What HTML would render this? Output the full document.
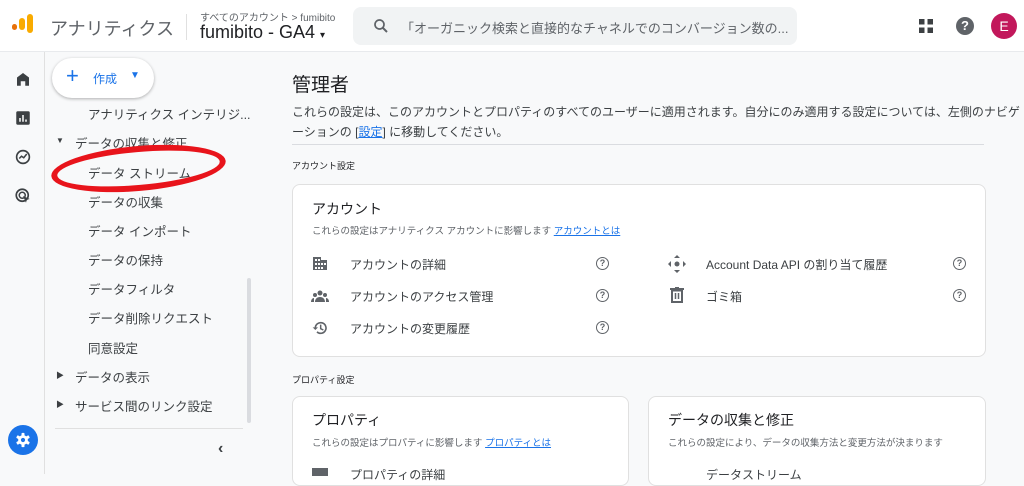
<!DOCTYPE html>
<html><head><meta charset="utf-8"><style>
*{box-sizing:border-box;margin:0;padding:0}
body{width:1024px;height:474px;overflow:hidden;background:#f8f9fa;font-family:"Liberation Sans","Noto Sans CJK JP",sans-serif;color:#202124;position:relative}
.a{position:absolute}
.hdr{left:0;top:0;width:1024px;height:52px;background:#fff;border-bottom:1px solid #e8eaed}
.rail{left:0;top:52px;width:45px;height:422px;border-right:1px solid #e0e0e0;background:#f8f9fa}
.nav{font-size:12.5px;color:#3c4043}
.card{background:#fff;border:1px solid #e0e0e0;border-radius:8px}
.t13{font-size:12px;color:#3c4043}
.q{width:13px;height:13px;border:1.6px solid #5f6368;border-radius:50%;font-size:9px;font-weight:bold;text-align:center;line-height:10px;color:#5f6368}
.lnk{color:#1a73e8;text-decoration:underline}
</style></head><body>
<div class="a hdr">
  <div class="a" style="left:12px;top:24px;width:5px;height:6px;background:#e8710a;border-radius:3px"></div>
  <div class="a" style="left:19px;top:18px;width:6px;height:12px;background:#f9ab00;border-radius:3px"></div>
  <div class="a" style="left:27px;top:14px;width:6px;height:19px;background:#f9ab00;border-radius:3px"></div>
  <div class="a" style="left:50px;top:15px;font-size:18px;color:#5f6368">アナリティクス</div>
  <div class="a" style="left:186px;top:14px;width:1px;height:26px;background:#e0e0e0"></div>
  <div class="a" style="left:200px;top:9px;font-size:10px;color:#5f6368">すべてのアカウント &gt; fumibito</div>
  <div class="a" style="left:200px;top:22px;font-size:18px;color:#202124">fumibito - GA4 <span style="font-size:10px">▾</span></div>
  <div class="a" style="left:353px;top:7px;width:444px;height:38px;background:#f1f3f4;border-radius:8px"></div>
  <svg class="a" style="left:372px;top:17px" width="18" height="18" viewBox="0 0 24 24"><circle cx="10" cy="10" r="6" fill="none" stroke="#5f6368" stroke-width="2.3"/><path d="M14.5 14.5L20 20" stroke="#5f6368" stroke-width="2.6"/></svg>
  <div class="a" style="left:401px;top:18px;font-size:13px;color:#5f6368">「オーガニック検索と直接的なチャネルでのコンバージョン数の...</div>
  <svg class="a" style="left:918px;top:18px" width="16" height="16" viewBox="0 0 16 16" fill="#3c4043"><rect x="1" y="1" width="5.5" height="5.5"/><rect x="9.5" y="1" width="5.5" height="5.5"/><rect x="1" y="9.5" width="5.5" height="5.5"/><rect x="9.5" y="9.5" width="5.5" height="5.5"/></svg>
  <div class="a" style="left:956px;top:17px;width:18px;height:18px;border-radius:50%;background:#5f6368;color:#fff;font-size:13px;font-weight:bold;text-align:center;line-height:18px">?</div>
  <div class="a" style="left:991px;top:13px;width:26px;height:26px;border-radius:50%;background:#c2185b;color:#fff;font-size:14px;text-align:center;line-height:26px">E</div>
</div>
<div class="a rail">
  <svg class="a" style="left:14px;top:18px" width="18" height="18" viewBox="0 0 24 24"><path d="M4 21V10l8-6 8 6v11h-5v-6H9v6z" fill="#3c4043"/></svg>
  <svg class="a" style="left:14px;top:57px" width="18" height="18" viewBox="0 0 24 24"><rect x="3" y="3" width="18" height="18" rx="2" fill="#3c4043"/><path d="M8 17v-5M12 17V8M16 17v-3" stroke="#fff" stroke-width="2"/></svg>
  <svg class="a" style="left:14px;top:96px" width="18" height="18" viewBox="0 0 24 24"><circle cx="12" cy="12" r="8.5" fill="none" stroke="#3c4043" stroke-width="2.2"/><path d="M7 14l3-3 3 2 4-5" fill="none" stroke="#3c4043" stroke-width="2"/></svg>
  <svg class="a" style="left:14px;top:135px" width="18" height="18" viewBox="0 0 24 24"><circle cx="11" cy="11" r="8" fill="none" stroke="#3c4043" stroke-width="2.2"/><circle cx="11" cy="11" r="4" fill="none" stroke="#3c4043" stroke-width="2"/><path d="M12 12l9 4-4 1-1 4z" fill="#3c4043"/></svg>
  <div class="a" style="left:8px;top:373px;width:30px;height:30px;border-radius:50%;background:#1a73e8"></div>
  <svg class="a" style="left:14px;top:379px" width="18" height="18" viewBox="0 0 24 24"><g fill="#fff"><circle cx="12" cy="12" r="6.5"/><rect x="10" y="2.5" width="4" height="19" rx="1"/><rect x="10" y="2.5" width="4" height="19" rx="1" transform="rotate(60 12 12)"/><rect x="10" y="2.5" width="4" height="19" rx="1" transform="rotate(120 12 12)"/></g><circle cx="12" cy="12" r="2.8" fill="#1a73e8"/></svg>
</div>
<div class="a" style="left:52px;top:58px;width:102px;height:40px;background:#fff;border-radius:20px;box-shadow:0 1px 3px rgba(0,0,0,.3)"></div>
<div class="a" style="left:66px;top:64px;font-size:22px;color:#1a73e8;line-height:24px">+</div>
<div class="a" style="left:93px;top:70px;font-size:12px;color:#1a73e8">作成</div>
<div class="a" style="left:130px;top:70px;font-size:10px;color:#1a73e8">▼</div>
<div class="a nav" style="left:88px;top:104px">アナリティクス インテリジ...</div>
<div class="a nav" style="left:56px;top:136px;font-size:8px">▼</div>
<div class="a nav" style="left:75px;top:133px">データの収集と修正</div>
<div class="a nav" style="left:88px;top:163px">データ ストリーム</div>
<div class="a nav" style="left:88px;top:192px">データの収集</div>
<div class="a nav" style="left:88px;top:221px">データ インポート</div>
<div class="a nav" style="left:88px;top:250px">データの保持</div>
<div class="a nav" style="left:88px;top:279px">データフィルタ</div>
<div class="a nav" style="left:88px;top:308px">データ削除リクエスト</div>
<div class="a nav" style="left:88px;top:338px">同意設定</div>
<div class="a nav" style="left:56px;top:370px;font-size:8px">▶</div>
<div class="a nav" style="left:75px;top:367px">データの表示</div>
<div class="a nav" style="left:56px;top:399px;font-size:8px">▶</div>
<div class="a nav" style="left:75px;top:396px">サービス間のリンク設定</div>
<div class="a" style="left:247px;top:278px;width:4px;height:145px;background:#dadce0;border-radius:2px"></div>
<div class="a" style="left:55px;top:428px;width:188px;height:1px;background:#e0e0e0"></div>
<div class="a" style="left:218px;top:440px;font-size:16px;font-weight:bold;color:#3c4043">‹</div>
<div class="a" style="left:51px;top:146px;width:175px;height:45px;border:6px solid #e8141b;border-radius:50%;transform:rotate(-5deg)"></div>

<div class="a" style="left:292px;top:70px;font-size:19px;color:#202124">管理者</div>
<div class="a t13" style="left:292px;top:102px;width:730px;line-height:20px">これらの設定は、このアカウントとプロパティのすべてのユーザーに適用されます。自分にのみ適用する設定については、左側のナビゲーションの [<span class="lnk">設定</span>] に移動してください。</div>
<div class="a" style="left:292px;top:144px;width:692px;height:1px;background:#dadce0"></div>
<div class="a" style="left:292px;top:159px;font-size:9px;color:#202124">アカウント設定</div>
<div class="a card" style="left:292px;top:184px;width:694px;height:173px"></div>
<div class="a" style="left:312px;top:199px;font-size:14px">アカウント</div>
<div class="a" style="left:312px;top:223px;font-size:9.5px;color:#5f6368">これらの設定はアナリティクス アカウントに影響します <span class="lnk">アカウントとは</span></div>
<svg class="a" style="left:312px;top:255px" width="16" height="16" viewBox="0 0 16 16" fill="#5f6368"><path d="M1 2h8v3h6v10H1zM3 4v2h2V4zm3 0v2h2V4zM3 8v2h2V8zm3 0v2h2V8zm3 0v2h2V8zm3 0v2h2V8zM3 12v2h2v-2zm3 0v2h2v-2zm3 0v2h2v-2z"/></svg>
<div class="a t13" style="left:350px;top:256px">アカウントの詳細</div>
<div class="a q" style="left:596px;top:257px">?</div>
<svg class="a" style="left:311px;top:289px" width="18" height="14" viewBox="0 0 18 14" fill="#5f6368"><circle cx="9" cy="4" r="2.5"/><circle cx="4" cy="6" r="2"/><circle cx="14" cy="6" r="2"/><path d="M4 13c0-3 2-5 5-5s5 2 5 5zM0 13c0-2 1-4 3-4v4zM18 13c0-2-1-4-3-4v4z"/></svg>
<div class="a t13" style="left:350px;top:288px">アカウントのアクセス管理</div>
<div class="a q" style="left:596px;top:289px">?</div>
<svg class="a" style="left:312px;top:320px" width="16" height="16" viewBox="0 0 24 24"><path d="M5 12a8 8 0 1 1 2.5 5.8" fill="none" stroke="#5f6368" stroke-width="2.4"/><path d="M1 11h8L5 15z" fill="#5f6368"/><path d="M13 7v6l4 2" fill="none" stroke="#5f6368" stroke-width="2.2"/></svg>
<div class="a t13" style="left:350px;top:320px">アカウントの変更履歴</div>
<div class="a q" style="left:596px;top:321px">?</div>
<svg class="a" style="left:668px;top:255px" width="18" height="18" viewBox="0 0 18 18" fill="#5f6368"><path d="M9 0l3 3H6zM9 18l3-3H6zM0 9l3-3v6zM18 9l-3-3v6z"/><circle cx="9" cy="9" r="2.5"/></svg>
<div class="a t13" style="left:706px;top:256px">Account Data API の割り当て履歴</div>
<div class="a q" style="left:953px;top:257px">?</div>
<svg class="a" style="left:670px;top:287px" width="14" height="16" viewBox="0 0 14 16"><path d="M0 2h14M5 1h4" stroke="#5f6368" stroke-width="2"/><rect x="2" y="3.5" width="10" height="11.5" fill="none" stroke="#5f6368" stroke-width="2"/><path d="M5.5 6v6M8.5 6v6" stroke="#5f6368" stroke-width="1.5"/></svg>
<div class="a t13" style="left:706px;top:288px">ゴミ箱</div>
<div class="a q" style="left:953px;top:289px">?</div>
<div class="a" style="left:292px;top:373px;font-size:9px">プロパティ設定</div>
<div class="a card" style="left:292px;top:396px;width:337px;height:90px"></div>
<div class="a" style="left:312px;top:410px;font-size:14px">プロパティ</div>
<div class="a" style="left:312px;top:435px;font-size:9.5px;color:#5f6368">これらの設定はプロパティに影響します <span class="lnk">プロパティとは</span></div>
<div class="a card" style="left:648px;top:396px;width:338px;height:90px"></div>
<div class="a" style="left:668px;top:410px;font-size:14px">データの収集と修正</div>
<div class="a" style="left:668px;top:435px;font-size:9.5px;color:#5f6368">これらの設定により、データの収集方法と変更方法が決まります</div>
<div class="a" style="left:312px;top:468px;width:16px;height:8px;background:#5f6368"></div>
<div class="a t13" style="left:350px;top:466px">プロパティの詳細</div>
<div class="a t13" style="left:706px;top:466px">データストリーム</div>
</body></html>
